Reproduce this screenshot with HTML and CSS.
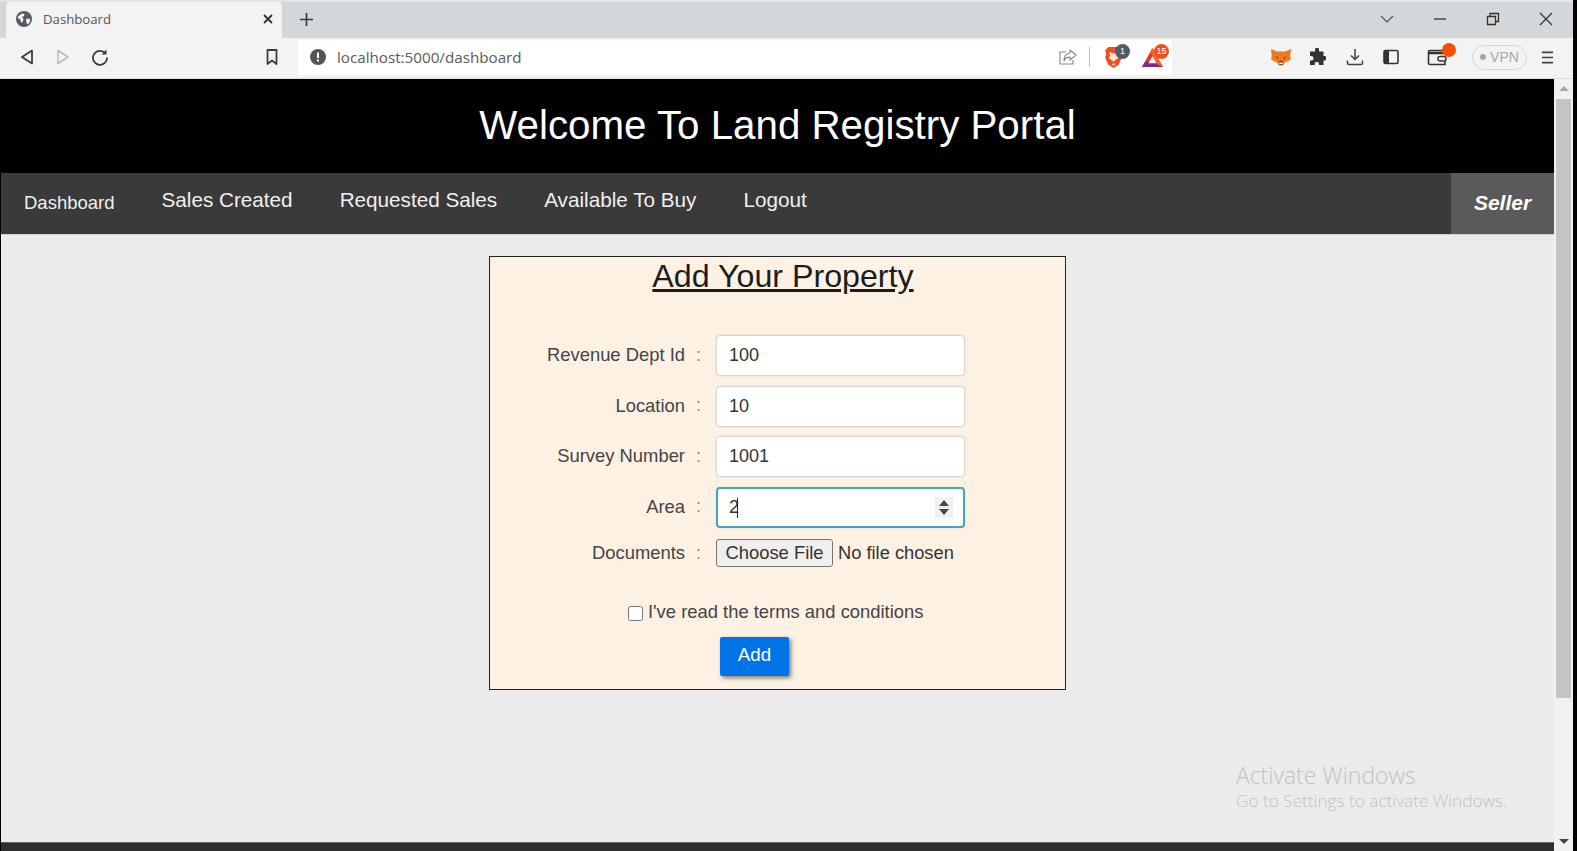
FILE: index.html
```html
<!DOCTYPE html>
<html lang="en">
<head>
<meta charset="utf-8">
<title>Dashboard</title>
<link rel="stylesheet" href="styles.css">
</head>
<body>
<div class="window">
  <div class="browser">
    <div class="tabstrip">
      <div class="tab">
        <svg class="favicon" viewBox="0 0 16 16"><circle cx="8" cy="8" r="8" fill="#555b60"/><path d="M2 5.500 6 2.500l2.500.5-.5 2-2 1 1.500 2-1 3.500-1.500-.5L4 8 2 7.500zM10 8l3.500-.5.8 2.500L12 13.500 10.500 12z" fill="#f3f3f3"/></svg>
        <span class="tab-title">Dashboard</span>
        <svg class="tab-close" viewBox="0 0 12 12"><path d="M2 2l8 8M10 2l-8 8" stroke="#333" stroke-width="1.800" fill="none"/></svg>
      </div>
      <svg class="new-tab" viewBox="0 0 16 16"><path d="M8 1v14M1 8h14" stroke="#3a3a3a" stroke-width="1.800" fill="none"/></svg>
      <div class="window-controls">
        <svg class="wc wc-chevron" viewBox="0 0 14 14"><path d="M1 4l6 6 6-6" stroke="#555" stroke-width="1.200" fill="none"/></svg>
        <svg class="wc wc-min" viewBox="0 0 14 14"><path d="M1 7h12" stroke="#333" stroke-width="1.300"/></svg>
        <svg class="wc wc-restore" viewBox="0 0 14 14"><path d="M1.500 4.500h8v8h-8zM4 4.500V1.500h8.500v8H9.500" stroke="#333" stroke-width="1.300" fill="none"/></svg>
        <svg class="wc wc-close" viewBox="0 0 14 14"><path d="M1 1l12 12M13 1L1 13" stroke="#333" stroke-width="1.200" fill="none"/></svg>
      </div>
    </div>
    <div class="toolbar">
      <svg class="tool tool-back" viewBox="0 0 16 18"><path d="M13 2.500v13L3 9z" stroke="#3d3d3d" stroke-width="1.800" fill="none" stroke-linejoin="round"/></svg>
      <svg class="tool tool-forward" viewBox="0 0 16 18"><path d="M3 2.500v13L13 9z" stroke="#b9bcbf" stroke-width="1.500" fill="none" stroke-linejoin="round"/></svg>
      <svg class="tool tool-reload" viewBox="0 0 18 18"><path d="M14.500 5.500A7 7 0 1 0 16 9.500" stroke="#3d3d3d" stroke-width="1.800" fill="none"/><path d="M15.500 1.500v5h-5z" fill="#3d3d3d"/></svg>
      <svg class="tool tool-bookmark" viewBox="0 0 14 18"><path d="M2.500 2h9v14L7 12.500 2.500 16z" stroke="#3d3d3d" stroke-width="1.800" fill="none" stroke-linejoin="round"/></svg>
      <div class="omnibox">
        <svg class="info" viewBox="0 0 16 16"><circle cx="8" cy="8" r="8" fill="#555"/><rect x="7" y="3.500" width="2" height="5.500" fill="#fff"/><rect x="7" y="10.500" width="2" height="2" fill="#fff"/></svg>
        <span class="url">localhost:5000/dashboard</span>
        <svg class="share" viewBox="0 0 20 18"><path d="M8 4H2v12h13v-4" stroke="#8b8b8b" stroke-width="1.200" fill="none"/><path d="M12 2l6 5-6 5V9.200C9 9 7 10.500 6 13c0-4.500 2-7.500 6-8z" stroke="#8b8b8b" stroke-width="1.200" fill="none" stroke-linejoin="round"/></svg>
        <span class="divider"></span>
        <div class="ext-icon ext-brave">
          <svg class="ext-glyph" viewBox="0 0 20 22"><path d="M5 1h10l3 3-1 4 1 3-3 7-5 3-5-3-3-7 1-3-1-4z" fill="#e8501f"/><path d="M6 6l4 1 4-1-1 4 2 1-5 4-5-4 2-1zM8 17h4l-2 2z" fill="#fbe3d8"/></svg>
          <span class="badge badge-grey">1</span>
        </div>
        <div class="ext-icon ext-bat">
          <svg class="ext-glyph" viewBox="0 0 22 20"><path d="M11 1 1 19h20z" fill="#e8341f"/><path d="M1 19h20l-3-5H4z" fill="#7a2a8f"/><path d="M21 19 11 1l-2 3.500L16 17z" fill="#f26b21"/><path d="M11 8.500l-4 7h8z" fill="#f3f3f3"/></svg>
          <span class="badge badge-orange">15</span>
        </div>
      </div>
      <svg class="tool tool-fox" viewBox="0 0 20 18"><path d="M0 1l6 2.500h8L20 1l-.8 7 .8 3-2.500 2-3.500 1.500-2 3H8l-2-3L2.500 13 0 11l.8-3z" fill="#ee7a22"/><path d="M4 8l4 1.500-1 2.500zM16 8l-4 1.500 1 2.500z" fill="#a55a1c"/><path d="M7.500 13.500 10 12.500l2.500 1L11.500 17h-3z" fill="#7b4a2a"/><path d="M8 14.500h4l-.5 1.500h-3z" fill="#f5e6d8"/></svg>
      <svg class="tool tool-puzzle" viewBox="0 0 18 18"><path d="M7 1.500a2 2 0 0 1 4 .5v1.500h4.500V8H17a2.300 2.300 0 0 1 0 4.500h-1.500V17H11v-1.500a2.200 2.200 0 0 0-4.300 0V17H2v-4.500h1.300a2.200 2.200 0 0 0 0-4.500H2V3.500h5z" fill="#333"/></svg>
      <svg class="tool tool-download" viewBox="0 0 18 18"><path d="M9 1v10M5 7.500 9 11.500 13 7.500M1.500 12.500v2.500a1.500 1.500 0 0 0 1.500 1.500h12a1.500 1.500 0 0 0 1.500-1.500v-2.500" stroke="#444" stroke-width="1.500" fill="none"/></svg>
      <svg class="tool tool-sidebar" viewBox="0 0 16 16"><rect x="1" y="1.500" width="14" height="13" rx="1.500" fill="none" stroke="#333" stroke-width="1.600"/><rect x="1" y="1.500" width="5" height="13" fill="#333"/></svg>
      <div class="ext-icon ext-wallet">
        <svg class="ext-glyph" viewBox="0 0 20 18"><path d="M18 4V2.500H3A1.500 1.500 0 0 0 1.500 4v11A1.500 1.500 0 0 0 3 16.500h15V13" stroke="#333" stroke-width="1.600" fill="none"/><path d="M1.500 5h16.500" stroke="#333" stroke-width="2.500"/><rect x="11" y="8.500" width="8" height="4.500" rx="2" fill="none" stroke="#333" stroke-width="1.500"/></svg>
        <span class="wallet-dot"></span>
      </div>
      <div class="vpn"><span class="vpn-dot"></span>VPN</div>
      <svg class="tool tool-menu" viewBox="0 0 14 14"><path d="M1 1.500h12M1 7h12M1 12.500h12" stroke="#444" stroke-width="1.700"/></svg>
    </div>
  </div>

  <div class="viewport">
    <div class="page">
      <header class="site-head"><h1>Welcome To Land Registry Portal</h1></header>
      <nav class="site-nav">
        <a class="nav-home">Dashboard</a>
        <a class="nav-link">Sales Created</a>
        <a class="nav-link">Requested Sales</a>
        <a class="nav-link">Available To Buy</a>
        <a class="nav-link">Logout</a>
        <span class="role">Seller</span>
      </nav>
      <main class="content">
        <form class="card">
          <h2 class="card-title">Add Your Property</h2>
          <div class="fields">
            <label class="f-label">Revenue Dept Id</label><span class="f-colon">:</span><input class="f-input" type="text" value="100">
            <label class="f-label">Location</label><span class="f-colon">:</span><input class="f-input" type="text" value="10">
            <label class="f-label">Survey Number</label><span class="f-colon">:</span><input class="f-input" type="text" value="1001">
            <label class="f-label">Area</label><span class="f-colon">:</span>
            <div class="area-wrap">
              <input class="f-input f-focus" type="text" value="2">
              <span class="caret"></span>
              <span class="spinner"><i class="spin-up"></i><i class="spin-down"></i></span>
            </div>
            <label class="f-label f-label-file">Documents</label><span class="f-colon f-label-file">:</span>
            <div class="file-row"><button class="file-btn" type="button">Choose File</button><span class="file-name">No file chosen</span></div>
          </div>
          <label class="terms"><input class="terms-box" type="checkbox"><span>I've read the terms and conditions</span></label>
          <button class="add-btn" type="button">Add</button>
        </form>
        <div class="activate">
          <div class="activate-title">Activate Windows</div>
          <div class="activate-sub">Go to Settings to activate Windows.</div>
        </div>
      </main>
      <footer class="site-foot"></footer>
    </div>
    <div class="scrollbar">
      <span class="sb-up"></span>
      <span class="sb-thumb"></span>
      <span class="sb-down"></span>
    </div>
  </div>
</div>
</body>
</html>
```
FILE: styles.css
```css
* { box-sizing: border-box; }
html, body { margin: 0; height: 100%; overflow: hidden; }
body { background: #000; font-family: "Liberation Sans", Arial, sans-serif; }
.window { width: 1573px; height: 851px; display: flex; flex-direction: column; }

.browser { flex: none; height: 79px; display: flex; flex-direction: column; background: #f3f3f3; }
.tabstrip { height: 38px; flex: none; display: flex; align-items: flex-end; background: #d3d7da; border-top: 2px solid #e6e6e6; }
.tab { width: 276px; height: 36px; margin-left: 6px; background: #f3f3f3; display: flex; align-items: center; padding: 0 0 2px 10px; border-radius: 4px 4px 0 0; }
.favicon { width: 16px; height: 16px; flex: none; }
.tab-title { margin-left: 11px; font: 13.200px "Open Sans", sans-serif; color: #555; }
.tab-close { width: 12px; height: 12px; margin-left: auto; margin-right: 8px; }
.new-tab { width: 15px; height: 15px; margin: 0 0 11px 17px; }
.window-controls { margin-left: auto; display: flex; align-items: center; height: 36px; padding-bottom: 3px; }
.wc { display: block; }
.wc-chevron { width: 14px; height: 14px; margin-right: 39px; }
.wc-min { width: 14px; height: 14px; margin-right: 39px; }
.wc-restore { width: 14px; height: 14px; margin-right: 39px; }
.wc-close { width: 14px; height: 14px; margin-right: 20px; }

.toolbar { height: 41px; flex: none; display: flex; align-items: center; padding-bottom: 2px; border-bottom: 1px solid #dcdcdc; }
.tool { display: block; flex: none; }
.tool-back { width: 16px; height: 18px; margin-left: 19px; }
.tool-forward { width: 16px; height: 18px; margin-left: 20px; }
.tool-reload { width: 18px; height: 18px; margin-left: 20px; }
.tool-bookmark { width: 14px; height: 18px; margin-left: 156px; }
.omnibox { width: 874px; height: 35px; margin-left: 19px; background: #fff; display: flex; align-items: center; flex: none; padding-left: 12px; }
.info { width: 16px; height: 16px; flex: none; }
.url { margin-left: 11px; font: 15.200px "Open Sans", sans-serif; color: #5a5a5a; }
.share { width: 20px; height: 18px; margin-left: auto; flex: none; }
.divider { width: 1px; height: 20px; background: #bcbcbc; margin-left: 11px; }
.ext-icon { position: relative; flex: none; }
.ext-glyph { display: block; }
.ext-brave { width: 21px; height: 23px; margin-left: 13px; }
.ext-brave .ext-glyph { width: 21px; height: 23px; }
.ext-bat { width: 23px; height: 21px; margin-left: 17px; margin-right: 8px; }
.ext-bat .ext-glyph { width: 23px; height: 21px; }
.badge { position: absolute; width: 15px; height: 15px; border-radius: 50%; color: #fff; font: 9px/15px "Liberation Sans", sans-serif; text-align: center; }
.badge-grey { background: #555a66; right: -6px; top: -2px; }
.badge-orange { background: #f1501e; right: -5px; top: -3px; }
.tool-fox { width: 20px; height: 18px; margin-left: 99px; }
.tool-puzzle { width: 18px; height: 18px; margin-left: 17px; }
.tool-download { width: 18px; height: 18px; margin-left: 20px; }
.tool-sidebar { width: 16px; height: 16px; margin-left: 19px; }
.ext-wallet { width: 20px; height: 18px; margin-left: 28px; }
.ext-wallet .ext-glyph { width: 20px; height: 18px; }
.wallet-dot { position: absolute; width: 14px; height: 14px; border-radius: 50%; background: #fa5005; top: -5px; right: -9px; }
.vpn { width: 55px; height: 25px; margin-left: 25px; border: 1px solid #d6d6d6; border-radius: 13px; display: flex; align-items: center; justify-content: center; gap: 4px; flex: none; font: 14px "Liberation Sans", sans-serif; color: #a5a8ab; }
.vpn-dot { width: 6px; height: 6px; border-radius: 50%; background: #a5a8ab; }
.tool-menu { width: 13px; height: 13px; margin-left: 14px; }

.viewport { flex: 1; min-height: 0; display: flex; }
.page { flex: 1; min-width: 0; display: flex; flex-direction: column; border-left: 1px solid #000; background: #ebebeb; }
.site-head { height: 94px; flex: none; background: #000; display: flex; align-items: center; justify-content: center; }
.site-head h1 { margin: 0; font-size: 40.300px; font-weight: 400; color: #fff; }
.site-nav { height: 62px; flex: none; background: #3a3a3a; display: flex; align-items: center; border-bottom: 1px solid #cfcfcf; }
.nav-home { font-size: 18.500px; color: #f0f0f0; margin-left: 23px; margin-right: 23.500px; padding-bottom: 2px; }
.nav-link { font-size: 20.700px; color: #f0f0f0; padding: 0 23.500px 7px; }
.role { margin-left: auto; width: 103px; height: 100%; background: #5a5a5a; color: #fff; font-size: 21px; font-weight: 700; font-style: italic; display: flex; align-items: center; justify-content: center; padding-bottom: 1px; }

.content { flex: 1; min-height: 0; position: relative; padding-top: 21px; }
.card { width: 577px; height: 434px; margin: 0 auto; background: #fdf1e3; border: 1px solid #222; }
.card-title { margin: 0; padding-left: 11px; height: 40px; font-size: 32.200px; line-height: 39px; font-weight: 400; text-align: center; text-decoration: underline; color: #1c1c1c; }
.fields { margin-top: 38px; display: grid; grid-template-columns: 195px 31px 249px; grid-template-rows: 41px 41px 41px 41px 28px; row-gap: 9.500px; align-items: center; }
.f-label { font-size: 18.400px; text-align: right; color: #444; padding-bottom: 1px; }
.f-colon { font-size: 18px; color: #8a8a8a; padding-left: 11px; padding-bottom: 1px; }
.f-label-file { margin-top: 5px; }
.f-input { display: block; width: 249px; height: 41px; border: 1px solid #d6d6d6; border-radius: 4px; background: #fff; padding: 0 12px; font: 18px "Liberation Sans", sans-serif; color: #333; box-shadow: 0 0 2px rgba(0,0,0,.12); outline: none; }
.f-focus { border: 2px solid #43a4c4; padding: 0 11px; }
.area-wrap { position: relative; width: 249px; height: 41px; }
.caret { position: absolute; left: 21px; top: 11px; width: 1px; height: 20px; background: #222; }
.spinner { position: absolute; right: 12px; top: 10px; width: 18px; height: 21px; background: #f1f1f1; display: flex; flex-direction: column; align-items: center; justify-content: center; gap: 3px; }
.spin-up { width: 0; height: 0; border: 5px solid transparent; border-top: 0; border-bottom: 6px solid #444; }
.spin-down { width: 0; height: 0; border: 5px solid transparent; border-bottom: 0; border-top: 6px solid #444; }
.file-row { display: flex; align-items: center; margin-top: 3px; height: 28px; }
.file-btn { width: 117px; height: 28px; padding: 0; background: #efefef; border: 1px solid #767676; border-radius: 3px; font: 18.400px "Liberation Sans", sans-serif; color: #333; }
.file-name { margin-left: 5px; font-size: 18.300px; color: #333; white-space: nowrap; }
.terms { display: flex; align-items: center; margin: 37px 0 0 138px; height: 20px; font-size: 18.400px; color: #444; }
.terms-box { width: 15px; height: 15px; margin: 3px 5px 0 0; flex: none; }
.add-btn { display: block; width: 69px; height: 39px; margin: 15px 0 0 230px; padding: 0 0 3px; border: 0; border-radius: 2px; background: #0073e6; color: #fff; font: 18.700px "Liberation Sans", sans-serif; box-shadow: 2px 2px 4px rgba(40,40,40,.6); }

.activate { position: absolute; left: 1235px; top: 526px; font-family: "Open Sans", sans-serif; font-weight: 300; color: #c2c2c2; }
.activate-title { font-size: 22.900px; line-height: 29px; }
.activate-sub { font-size: 17.200px; line-height: 21px; }

.site-foot { height: 9px; flex: none; background: #2f2f2f; border-top: 1px solid #666; }

.scrollbar { width: 19px; flex: none; background: #f1f1f1; display: flex; flex-direction: column; align-items: center; }
.sb-up { width: 0; height: 0; margin-top: 7px; border: 5px solid transparent; border-top: 0; border-bottom: 5px solid #a8a8a8; }
.sb-thumb { width: 15px; height: 599px; margin-top: 8px; background: #c4c4c4; }
.sb-down { width: 0; height: 0; margin-top: auto; margin-bottom: 7px; border: 5px solid transparent; border-bottom: 0; border-top: 5px solid #444; }
```
